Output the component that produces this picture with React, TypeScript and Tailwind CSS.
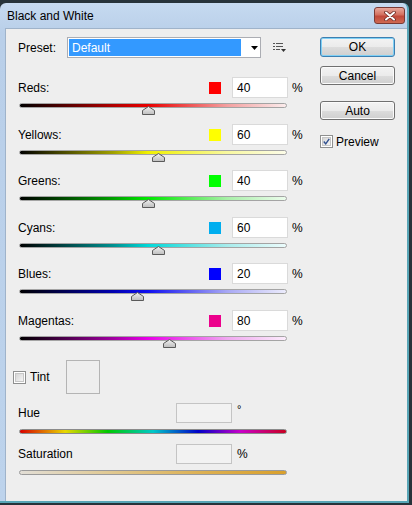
import React from "react";

const font = { fontFamily: '"Liberation Sans", Arial, sans-serif' };

type Row = {
  label: string;
  value: number;
  swatch: string;
  track: string;
  mt: string;
};

const rows: Row[] = [
  { label: "Reds:", value: 40, swatch: "bg-[#ff0000]", track: "bg-[linear-gradient(to_right,#000,#b00000_35%,#e80000_48%,#f4a0a0_78%,#fbecec)]", mt: "mt-[19px]" },
  { label: "Yellows:", value: 60, swatch: "bg-[#ffff00]", track: "bg-[linear-gradient(to_right,#000,#a0a000_35%,#f0f000_48%,#f8f8a0_78%,#fcfce8)]", mt: "mt-[9px]" },
  { label: "Greens:", value: 40, swatch: "bg-[#00ff00]", track: "bg-[linear-gradient(to_right,#000,#00a000_35%,#00e800_48%,#a8f0a8_78%,#ecfcec)]", mt: "mt-[8px]" },
  { label: "Cyans:", value: 60, swatch: "bg-[#00aeef]", track: "bg-[linear-gradient(to_right,#000,#009090_35%,#00d8d8_48%,#a8ecec_78%,#ecfcfc)]", mt: "mt-[9px]" },
  { label: "Blues:", value: 20, swatch: "bg-[#0000ff]", track: "bg-[linear-gradient(to_right,#000,#0000b0_35%,#1010f0_48%,#a8a8f4_78%,#ececfc)]", mt: "mt-[8px]" },
  { label: "Magentas:", value: 80, swatch: "bg-[#ec008c]", track: "bg-[linear-gradient(to_right,#000,#a000a0_35%,#e800e8_48%,#f0a8f0_78%,#fcecfc)]", mt: "mt-[9px]" },
];

function Thumb({ left }: { left: number }) {
  return (
    <svg
      width="13"
      height="9"
      viewBox="0 0 13 9"
      className="absolute top-[3px]"
      style={{ left: left - 6 }}
    >
      <defs>
        <linearGradient id="tg" x1="0" y1="0" x2="0" y2="1">
          <stop offset="0" stopColor="#f2f2f2" />
          <stop offset="1" stopColor="#bdbdbd" />
        </linearGradient>
      </defs>
      <path d="M6.5 0.5 L12.5 4.5 L12.5 8.5 L0.5 8.5 L0.5 4.5 Z" fill="url(#tg)" stroke="#5a5a5a" strokeWidth="1" />
    </svg>
  );
}

function Slider({ value, track }: { value: number; track: string }) {
  const pos = ((value + 200) / 500) * 268;
  return (
    <div className="relative ml-[6px] w-[268px] h-[12px]">
      <div className={`absolute left-0 top-0 w-[268px] h-[5px] rounded-full border border-[#a4a4a4] ${track}`} />
      <Thumb left={pos} />
    </div>
  );
}

function Checkbox({ checked }: { checked?: boolean }) {
  return (
    <div className="w-[13px] h-[13px] border border-[#8e8f8f] bg-white p-[1px] flex-none">
      <div className="w-full h-full border border-[#c6c6c6] bg-[linear-gradient(135deg,#d6d6d6,#f4f4f4)] flex items-center justify-center">
        {checked && (
          <svg width="9" height="9" viewBox="0 0 9 9">
            <path d="M1 4.5 L3.5 7.5 L8 1" fill="none" stroke="#2f4f8f" strokeWidth="1.8" />
          </svg>
        )}
      </div>
    </div>
  );
}

function Button({ label, def, h }: { label: string; def?: boolean; h: string }) {
  return (
    <div
      className={`w-[75px] ${h} rounded-[3px] border ${
        def ? "border-[#3c7fb1] shadow-[inset_0_0_0_1px_#7fd0f5]" : "border-[#707070] shadow-[inset_0_0_0_1px_#fbfbfb]"
      } bg-[linear-gradient(to_bottom,#f3f3f3_0%,#ebebeb_50%,#dddddd_51%,#cfcfcf_100%)] flex items-center justify-center text-[12px] text-black`}
    >
      {label}
    </div>
  );
}

export default function App() {
  return (
    <div className="w-[412px] h-[505px] bg-[#27333a] pt-[3px] overflow-hidden" style={font}>
      <div className="w-[409px] h-[500px] flex flex-col rounded-t-[6px] border-r-2 border-b-2 border-[#58a5b6] bg-[linear-gradient(to_bottom,#c6daf0,#b9cfe9_30px,#bdd3ec)]">
        {/* Title bar */}
        <div className="h-[25px] flex-none flex items-center justify-between pl-[7px] pr-[2px]">
          <span className="text-[12px] text-black">Black and White</span>
          <div className="w-[31px] h-[17px] rounded-[3px] border border-[#7a3a34] bg-[linear-gradient(to_bottom,#e8a89c,#d3705f_45%,#c0483a_55%,#cf6a52)] flex items-center justify-center">
            <svg width="14" height="10" viewBox="0 0 14 10">
              <path d="M3 1.5 L11 8.5 M11 1.5 L3 8.5" stroke="#6a2a24" strokeWidth="3.6" strokeLinecap="round" />
              <path d="M3 1.5 L11 8.5 M11 1.5 L3 8.5" stroke="#ffffff" strokeWidth="2" strokeLinecap="round" />
            </svg>
          </div>
        </div>

        {/* Body */}
        <div className="flex-1 min-h-0 overflow-hidden ml-[5px] bg-[#eeeeee] border-t border-l border-[#9fb3ca] flex pl-[7px] pt-[8px] text-[12px] text-black">
          {/* Left column */}
          <div className="w-[287px] flex-none flex flex-col">
            {/* Preset */}
            <div className="h-[21px] flex-none flex items-center">
              <span className="w-[54px] flex-none pl-[5px]">Preset:</span>
              <div className="w-[194px] h-[21px] flex-none border border-[#abadb3] bg-white flex items-center pl-[1px]">
                <div className="w-[172px] h-[17px] bg-[#3399ff] text-white pl-[3px] flex items-center">Default</div>
                <svg width="7" height="4" viewBox="0 0 7 4" className="ml-[10px]">
                  <path d="M0 0 L7 0 L3.5 4 Z" fill="#000" />
                </svg>
              </div>
              <svg width="13" height="9" viewBox="0 0 13 9" className="ml-[12px]">
                <rect x="0" y="0" width="2" height="1" fill="#555" />
                <rect x="3" y="0" width="7" height="1" fill="#555" />
                <rect x="0" y="3" width="2" height="1" fill="#555" />
                <rect x="3" y="3" width="7" height="1" fill="#555" />
                <rect x="0" y="6" width="2" height="1" fill="#555" />
                <rect x="3" y="6" width="4" height="1" fill="#555" />
                <path d="M8 6 L13 6 L10.5 9 Z" fill="#333" />
              </svg>
            </div>

            {rows.map((r) => (
              <div key={r.label} className={`flex flex-col flex-none ${r.mt}`}>
                <div className="h-[21px] flex items-center">
                  <span className="w-[196px] flex-none pl-[5px]">{r.label}</span>
                  <div className={`w-[12px] h-[12px] flex-none ${r.swatch}`} />
                  <div className="ml-[11px] w-[56px] h-[21px] flex-none bg-white border border-[#dadada] flex items-center pl-[4px]">
                    {r.value}
                  </div>
                  <span className="ml-[4px]">%</span>
                </div>
                <div className="mt-[5px]">
                  <Slider value={r.value} track={r.track} />
                </div>
              </div>
            ))}

            {/* Tint */}
            <div className="mt-[12px] h-[34px] flex-none flex items-center">
              <Checkbox />
              <span className="ml-[4px] w-[36px]">Tint</span>
              <div className="w-[34px] h-[34px] border border-[#b4b4b4]" />
            </div>

            {/* Hue */}
            <div className="mt-[9px] h-[20px] flex-none flex items-center">
              <span className="w-[163px] flex-none pl-[5px]">Hue</span>
              <div className="w-[56px] h-[20px] flex-none bg-[#f2f2f2] border border-[#c4c4c4]" />
              <span className="ml-[5px] self-start -mt-[2px] text-[11px]">°</span>
            </div>
            <div className="mt-[6px] ml-[6px] flex-none w-[268px] h-[5px] rounded-full border border-[#8a8a8a] bg-[linear-gradient(to_right,#d80000,#e8d800_17%,#00c800_33%,#00c8c8_50%,#0000c8_67%,#c800c8_83%,#c80020)]" />

            {/* Saturation */}
            <div className="mt-[10px] h-[20px] flex-none flex items-center">
              <span className="w-[163px] flex-none pl-[5px]">Saturation</span>
              <div className="w-[56px] h-[20px] flex-none bg-[#f2f2f2] border border-[#c4c4c4]" />
              <span className="ml-[5px]">%</span>
            </div>
            <div className="mt-[6px] ml-[6px] flex-none w-[268px] h-[5px] rounded-full border border-[#9a9a9a] bg-[linear-gradient(to_right,#e2ded6,#e0c890_35%,#dcaf50_70%,#d9a02c)]" />
          </div>

          {/* Right column */}
          <div className="ml-[20px] w-[75px] flex-none flex flex-col">
            <Button label="OK" def h="h-[20px]" />
            <div className="mt-[9px]">
              <Button label="Cancel" h="h-[19px]" />
            </div>
            <div className="mt-[16px]">
              <Button label="Auto" h="h-[19px]" />
            </div>
            <div className="mt-[15px] h-[13px] flex items-center">
              <Checkbox checked />
              <span className="ml-[3px]">Preview</span>
            </div>
          </div>
        </div>
      </div>
    </div>
  );
}
